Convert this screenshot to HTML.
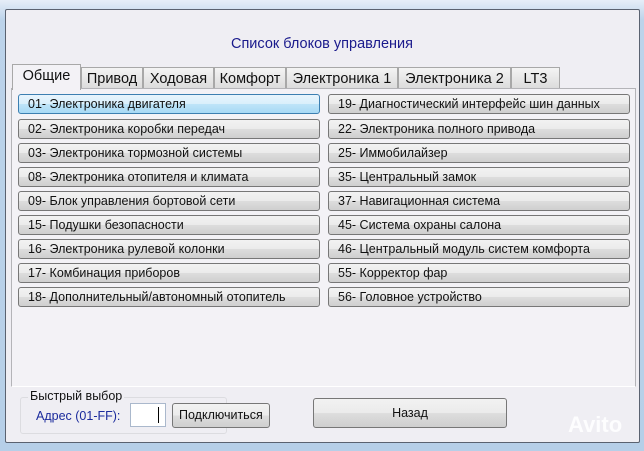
<!DOCTYPE html><html><head><style>
body{margin:0;width:644px;height:451px;background:linear-gradient(#e6eef8,#bcd3ea 20px,#b6cfe8);font-family:"Liberation Sans",sans-serif;position:relative;overflow:hidden}
.win{position:absolute;left:5px;top:9px;width:633px;height:432px;background:#efeef3;border:1px solid #5a6270;border-radius:2px}
.title{position:absolute;left:0;width:644px;top:36px;text-align:center;color:#1a1a8c;font-size:14.5px}
.tab{position:absolute;top:67px;height:21px;border:1px solid #a8a8a8;border-bottom:none;background:linear-gradient(#f4f4f4,#dcdcdc);font-size:14.5px;color:#111;text-align:center;line-height:22px;box-sizing:border-box}
.tab.sel{top:64px;height:26px;background:#f3f2f6;z-index:2}
.panel{position:absolute;left:11px;top:88px;width:623px;height:297px;background:#f3f2f6;border:1px solid #b4b4b8;border-bottom-color:#fff}
.b{position:absolute;height:20px;width:302px;box-sizing:border-box;border:1px solid #777;border-radius:3px;background:linear-gradient(#f2f2f2 0,#ebebeb 50%,#dddddd 51%,#cfcfcf);font-size:12.5px;line-height:18px;padding-left:9px;color:#111;white-space:nowrap}
.b.h{background:linear-gradient(#e8f5fd 0,#d9effb 50%,#bee4f8 51%,#a7d9f5);border-color:#3c7fb1}
</style></head><body>
<div class="win"></div>
<div class="title">Список блоков управления</div>
<div class="panel"></div>
<div class="tab sel" style="left:12px;width:69px">Общие</div>
<div class="tab" style="left:81px;width:62px">Привод</div>
<div class="tab" style="left:143px;width:71px">Ходовая</div>
<div class="tab" style="left:214px;width:72px">Комфорт</div>
<div class="tab" style="left:286px;width:112px">Электроника 1</div>
<div class="tab" style="left:398px;width:113px">Электроника 2</div>
<div class="tab" style="left:511px;width:49px">LT3</div>
<div class="b h" style="left:18px;top:94px">01- Электроника двигателя</div>
<div class="b" style="left:18px;top:119px">02- Электроника коробки передач</div>
<div class="b" style="left:18px;top:143px">03- Электроника тормозной системы</div>
<div class="b" style="left:18px;top:167px">08- Электроника отопителя и климата</div>
<div class="b" style="left:18px;top:191px">09- Блок управления бортовой сети</div>
<div class="b" style="left:18px;top:215px">15- Подушки безопасности</div>
<div class="b" style="left:18px;top:239px">16- Электроника рулевой колонки</div>
<div class="b" style="left:18px;top:263px">17- Комбинация приборов</div>
<div class="b" style="left:18px;top:287px">18- Дополнительный/автономный отопитель</div>
<div class="b" style="left:328px;top:94px">19- Диагностический интерфейс шин данных</div>
<div class="b" style="left:328px;top:119px">22- Электроника полного привода</div>
<div class="b" style="left:328px;top:143px">25- Иммобилайзер</div>
<div class="b" style="left:328px;top:167px">35- Центральный замок</div>
<div class="b" style="left:328px;top:191px">37- Навигационная система</div>
<div class="b" style="left:328px;top:215px">45- Система охраны салона</div>
<div class="b" style="left:328px;top:239px">46- Центральный модуль систем комфорта</div>
<div class="b" style="left:328px;top:263px">55- Корректор фар</div>
<div class="b" style="left:328px;top:287px">56- Головное устройство</div>
<div style="position:absolute;left:20px;top:397px;width:205px;height:35px;border:1px solid #dcdce0;border-radius:3px"></div>
<div style="position:absolute;left:28px;top:389px;background:#efeef3;padding:0 2px;font-size:12.5px;color:#111">Быстрый выбор</div>
<div style="position:absolute;left:36px;top:409px;font-size:12.5px;color:#1a2a9c">Адрес (01-FF):</div>
<div style="position:absolute;left:130px;top:403px;width:34px;height:22px;background:#fff;border:1px solid #aab8cc"><div style="position:absolute;left:27px;top:3px;width:1px;height:16px;background:#000"></div></div>
<div class="b" style="left:172px;top:403px;width:98px;height:25px;line-height:23px;padding-left:6px">Подключиться</div>
<div class="b" style="left:313px;top:398px;width:194px;height:30px;line-height:28px;padding:0;text-align:center">Назад</div>
<div style="position:absolute;left:568px;top:412px;font-size:22px;font-weight:bold;color:rgba(255,255,255,.85)">Avito</div>
</body></html>
